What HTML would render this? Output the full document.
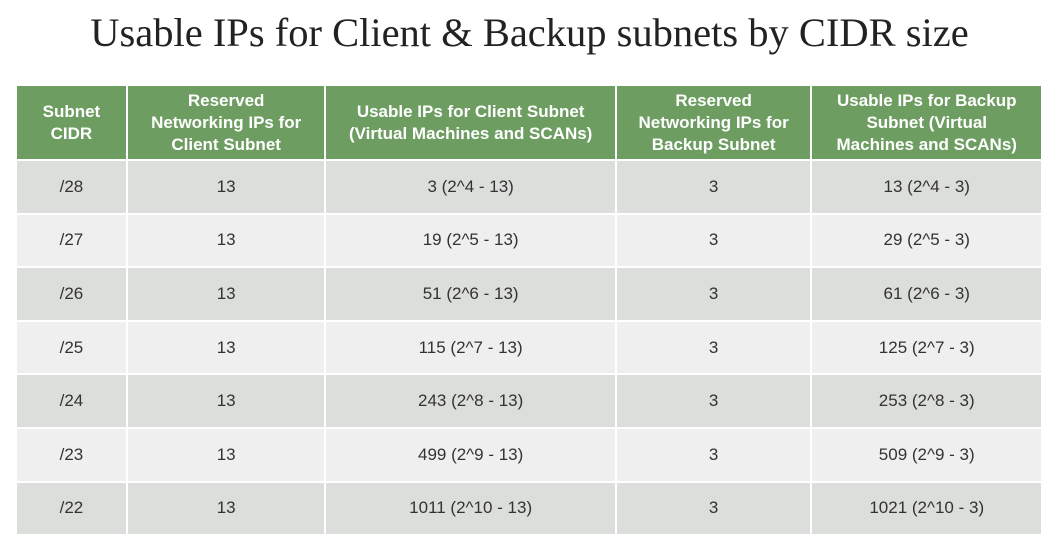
<!DOCTYPE html>
<html><head><style>
body{margin:0;width:1059px;height:549px;background:#fff;overflow:hidden;position:relative;font-family:"Liberation Sans",sans-serif}
h1{position:absolute;top:9px;left:0;width:1059px;margin:0;text-align:center;font:400 40.5px "Liberation Serif",serif;color:#222}
table{position:absolute;left:15px;top:84px;border-collapse:collapse;width:1028px}
td,th{border:2px solid #fff;text-align:center;padding:0}
th{background:#6e9d62;color:#fff;font-weight:bold;font-size:17px;line-height:22px;height:73px}
td{height:51.6px;font-size:17px;color:#333}
tr:nth-child(even) td{background:#dcdedb}
tr:nth-child(odd) td{background:#efefef}
</style></head><body>
<h1>Usable IPs for Client &amp; Backup subnets by CIDR size</h1>
<table>
<colgroup><col style="width:111px"><col style="width:199px"><col style="width:291px"><col style="width:196px"><col style="width:231px"></colgroup>
<tr><th>Subnet<br>CIDR</th><th>Reserved<br>Networking IPs for<br>Client Subnet</th><th>Usable IPs for Client Subnet<br>(Virtual Machines and SCANs)</th><th>Reserved<br>Networking IPs for<br>Backup Subnet</th><th>Usable IPs for Backup<br>Subnet (Virtual<br>Machines and SCANs)</th></tr>
<tr><td>/28</td><td>13</td><td>3 (2^4 - 13)</td><td>3</td><td>13 (2^4 - 3)</td></tr>
<tr><td>/27</td><td>13</td><td>19 (2^5 - 13)</td><td>3</td><td>29 (2^5 - 3)</td></tr>
<tr><td>/26</td><td>13</td><td>51 (2^6 - 13)</td><td>3</td><td>61 (2^6 - 3)</td></tr>
<tr><td>/25</td><td>13</td><td>115 (2^7 - 13)</td><td>3</td><td>125 (2^7 - 3)</td></tr>
<tr><td>/24</td><td>13</td><td>243 (2^8 - 13)</td><td>3</td><td>253 (2^8 - 3)</td></tr>
<tr><td>/23</td><td>13</td><td>499 (2^9 - 13)</td><td>3</td><td>509 (2^9 - 3)</td></tr>
<tr><td>/22</td><td>13</td><td>1011 (2^10 - 13)</td><td>3</td><td>1021 (2^10 - 3)</td></tr>
</table>
</body></html>
